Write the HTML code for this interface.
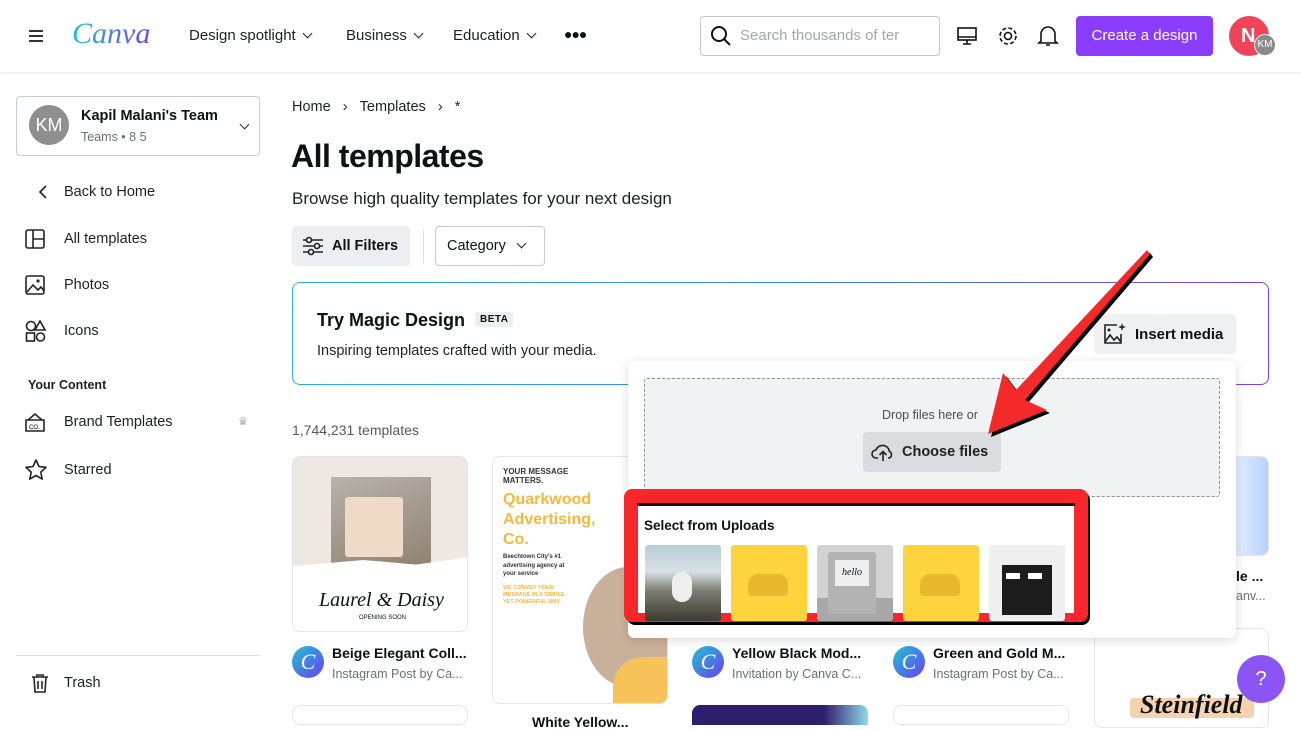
<!DOCTYPE html>
<html><head><meta charset="utf-8"><style>
*{box-sizing:border-box;margin:0;padding:0}
body{width:1301px;height:719px;overflow:hidden;background:#fff;font-family:"Liberation Sans",sans-serif;color:#0d1216;position:relative}
.a{position:absolute}
.t{white-space:nowrap}
.card{position:absolute;border:1px solid #e3e5e8;border-radius:8px;overflow:hidden;background:#fff}
.av{position:absolute;width:32px;height:32px;border-radius:50%;background:linear-gradient(135deg,#1fc3d6,#6a3ff0);color:#fff;font:italic 22px "Liberation Serif",serif;text-align:center;line-height:32px}
.ct{font-size:14px;font-weight:bold}
.cs{font-size:12.5px;color:#6b7078}
.side{font-size:14.5px;color:#1d2127}
.chev{display:inline-block;width:7px;height:7px;border-right:1.6px solid #222;border-bottom:1.6px solid #222;transform:rotate(45deg);margin-left:8px;position:relative;top:-3px}
</style></head><body>
<!-- header -->
<div class="a" style="left:0;top:0;width:1301px;height:72px;background:#fff;box-shadow:0 1px 3px rgba(0,0,0,.1)"></div>
<svg class="a" style="left:28px;top:28px" width="16" height="16"><path d="M1 3h14M1 8h14M1 13h14" stroke="#333" stroke-width="2"/></svg>
<div class="a t" style="left:72px;top:17px;font:italic 30px 'Liberation Serif',serif;background:linear-gradient(90deg,#20c4d4,#7b3ff2);-webkit-background-clip:text;color:transparent">Canva</div>
<div class="a t" style="left:189px;top:27px;font-size:15px;color:#1d2127">Design spotlight<span class="chev"></span></div>
<div class="a t" style="left:346px;top:27px;font-size:15px;color:#1d2127">Business<span class="chev"></span></div>
<div class="a t" style="left:453px;top:27px;font-size:15px;color:#1d2127">Education<span class="chev"></span></div>
<div class="a t" style="left:564px;top:26px;font-size:14px;font-weight:bold;letter-spacing:-1px">●●●</div>
<div class="a" style="left:700px;top:16px;width:240px;height:40px;border:1px solid #c4c8cd;border-radius:4px"></div>
<svg class="a" style="left:710px;top:25px" width="22" height="22"><circle cx="9" cy="9" r="7" fill="none" stroke="#111" stroke-width="2"/><path d="M14 14l6 6" stroke="#111" stroke-width="2"/></svg>
<div class="a t" style="left:740px;top:27px;font-size:15px;color:#a3a7ad">Search thousands of ter</div>
<svg class="a" style="left:956px;top:25px" width="22" height="22"><rect x="2" y="3" width="18" height="12" fill="none" stroke="#111" stroke-width="1.6"/><path d="M2 12h18M7 19h8M11 15v4" stroke="#111" stroke-width="1.6"/></svg>
<svg class="a" style="left:997px;top:25px" width="22" height="22"><circle cx="11" cy="11" r="3.5" fill="none" stroke="#111" stroke-width="1.6"/><circle cx="11" cy="11" r="8" fill="none" stroke="#111" stroke-width="1.6" stroke-dasharray="4 2.3"/></svg>
<svg class="a" style="left:1037px;top:24px" width="22" height="24"><path d="M4 17V10a7 7 0 0114 0v7l2 2H2z M9 21h4" fill="none" stroke="#111" stroke-width="1.6"/></svg>
<div class="a t" style="left:1076px;top:16px;width:137px;height:40px;background:#8b3dff;border-radius:4px;color:#fff;font-size:15px;text-align:center;line-height:40px">Create a design</div>
<div class="a" style="left:1229px;top:16px;width:40px;height:40px;border-radius:50%;background:#ef4458;color:#fff;font-size:20px;font-weight:bold;line-height:40px;padding-left:12px">N</div>
<div class="a" style="left:1254px;top:34px;width:22px;height:22px;border-radius:50%;background:#8a8a8a;border:1.5px solid #fff;color:#fff;font-size:10px;line-height:19px;text-align:center">KM</div>
<!-- sidebar -->
<div class="a" style="left:16px;top:96px;width:244px;height:60px;border:1px solid #c8ccd0;border-radius:4px"></div>
<div class="a" style="left:29px;top:105px;width:40px;height:40px;border-radius:50%;background:#8f8f8f;color:#fff;font-size:18px;line-height:40px;text-align:center">KM</div>
<div class="a t" style="left:81px;top:108px;font-size:14.5px;font-weight:bold">Kapil Malani's Team</div>
<div class="a t" style="left:81px;top:130px;font-size:12.5px;color:#6b7078">Teams • 8 5</div>
<div class="a" style="left:233px;top:118px"><span class="chev"></span></div>
<svg class="a" style="left:37px;top:184px" width="12" height="16"><path d="M9 2L3 8l6 6" fill="none" stroke="#222" stroke-width="1.6"/></svg>
<div class="a t side" style="left:64px;top:184px">Back to Home</div>
<svg class="a" style="left:25px;top:229px" width="22" height="20"><rect x="1" y="1" width="18" height="18" rx="2" fill="none" stroke="#222" stroke-width="1.6"/><path d="M8 1v18M8 10h11" stroke="#222" stroke-width="1.6"/></svg>
<div class="a t side" style="left:64px;top:231px">All templates</div>
<svg class="a" style="left:25px;top:275px" width="22" height="20"><rect x="1" y="1" width="18" height="18" rx="2" fill="none" stroke="#222" stroke-width="1.6"/><path d="M2 17l6-7 5 5 3-3 3 4" fill="none" stroke="#222" stroke-width="1.6"/><circle cx="13" cy="6" r="1.6" fill="#222"/></svg>
<div class="a t side" style="left:64px;top:277px">Photos</div>
<svg class="a" style="left:25px;top:320px" width="22" height="22"><circle cx="6" cy="6" r="4.5" fill="none" stroke="#222" stroke-width="1.6"/><path d="M15 1l5 9h-10z" fill="none" stroke="#222" stroke-width="1.6"/><rect x="1.5" y="13" width="8" height="8" fill="none" stroke="#222" stroke-width="1.6"/><circle cx="15.5" cy="17" r="4" fill="none" stroke="#222" stroke-width="1.6"/></svg>
<div class="a t side" style="left:64px;top:323px">Icons</div>
<div class="a t" style="left:28px;top:378px;font-size:12.5px;font-weight:bold;color:#1d2127">Your Content</div>
<svg class="a" style="left:24px;top:411px" width="22" height="22"><path d="M2 9h18v11H2z M4 9l7-6 7 6" fill="none" stroke="#222" stroke-width="1.6"/><text x="5" y="18" font-size="6" font-family="Liberation Sans">CO.</text></svg>
<div class="a t side" style="left:64px;top:414px">Brand Templates</div>
<div class="a" style="left:238px;top:415px;font-size:11px;color:#aaa">♛</div>
<svg class="a" style="left:24px;top:458px" width="24" height="23"><path d="M12 2l3 6.5 7 .8-5.2 4.8 1.4 7L12 17.5 5.8 21.1l1.4-7L2 9.3l7-.8z" fill="none" stroke="#222" stroke-width="1.6" stroke-linejoin="round"/></svg>
<div class="a t side" style="left:64px;top:462px">Starred</div>
<div class="a" style="left:16px;top:655px;width:244px;height:1px;background:#e0e2e5"></div>
<svg class="a" style="left:30px;top:673px" width="20" height="20"><path d="M2 4h16M7 4V2h6v2M4 4l1 15h10l1-15M8 8v8M12 8v8" fill="none" stroke="#222" stroke-width="1.6"/></svg>
<div class="a t side" style="left:64px;top:675px">Trash</div>
<!-- main -->
<div class="a t" style="left:292px;top:99px;font-size:14.5px;color:#1d2127">Home&nbsp;&nbsp;&nbsp;›&nbsp;&nbsp;&nbsp;Templates&nbsp;&nbsp;&nbsp;›&nbsp;&nbsp;&nbsp;*</div>
<div class="a t" style="left:291px;top:138px;font-size:32px;font-weight:bold;letter-spacing:-.5px">All templates</div>
<div class="a t" style="left:292px;top:189px;font-size:17px;color:#1d2127">Browse high quality templates for your next design</div>
<div class="a" style="left:292px;top:226px;width:118px;height:40px;background:#eceef1;border-radius:4px"></div>
<svg class="a" style="left:302px;top:236px" width="22" height="20"><path d="M1 4h20M1 10h20M1 16h20" stroke="#222" stroke-width="1.6"/><circle cx="7" cy="4" r="2.5" fill="#eceef1" stroke="#222" stroke-width="1.6"/><circle cx="15" cy="10" r="2.5" fill="#eceef1" stroke="#222" stroke-width="1.6"/><circle cx="9" cy="16" r="2.5" fill="#eceef1" stroke="#222" stroke-width="1.6"/></svg>
<div class="a t" style="left:332px;top:238px;font-size:14.5px;font-weight:bold">All Filters</div>
<div class="a" style="left:423px;top:229px;width:1px;height:34px;background:#dcdfe3"></div>
<div class="a" style="left:435px;top:226px;width:110px;height:40px;border:1px solid #c8ccd0;border-radius:4px"></div>
<div class="a t" style="left:447px;top:238px;font-size:14.5px">Category<span class="chev" style="margin-left:12px"></span></div>
<div class="a" style="left:292px;top:282px;width:977px;height:103px;border-radius:8px;background:linear-gradient(90deg,#27b4d8,#3a7de0 60%,#7d3fe8)"></div>
<div class="a" style="left:293px;top:283px;width:975px;height:101px;border-radius:7px;background:#fff"></div>
<div class="a t" style="left:317px;top:310px;font-size:18px;font-weight:bold">Try Magic Design</div>
<div class="a t" style="left:475px;top:312px;font-size:10px;font-weight:bold;background:#eceef1;padding:2px 5px;border-radius:3px;letter-spacing:.5px">BETA</div>
<div class="a t" style="left:317px;top:343px;font-size:14.5px;color:#1d2127">Inspiring templates crafted with your media.</div>
<div class="a" style="left:1094px;top:314px;width:142px;height:40px;background:#eff0f2;border-radius:4px"></div>
<svg class="a" style="left:1103px;top:322px" width="24" height="24"><path d="M14 3H2v18h16v-9" fill="none" stroke="#222" stroke-width="1.6"/><path d="M2 20l5-7 4 5 3-3 4 5" fill="none" stroke="#222" stroke-width="1.6"/><circle cx="6" cy="8" r="1.5" fill="#222"/><path d="M19 1l1 3 3 1-3 1-1 3-1-3-3-1 3-1z" fill="#222"/></svg>
<div class="a t" style="left:1135px;top:326px;font-size:15px;font-weight:bold">Insert media</div>
<div class="a t" style="left:292px;top:422px;font-size:14px;color:#55595f">1,744,231 templates</div>
<!-- cards -->
<div class="card" style="left:292px;top:456px;width:176px;height:176px;background:#efe7e1">
 <div class="a" style="left:38px;top:20px;width:100px;height:105px;background:linear-gradient(160deg,#b7b2ab,#8a7c6a)"></div>
 <div class="a" style="left:52px;top:40px;width:58px;height:60px;background:#efd9c7;border-radius:3px"></div>
 <div class="a" style="left:0;top:100px;width:176px;height:76px;background:#fff;clip-path:polygon(0 12%,40% 4%,70% 10%,100% 0,100% 100%,0 100%)"></div>
 <div class="a t" style="left:26px;top:132px;font:italic 20px 'Liberation Serif',serif">Laurel &amp; Daisy</div>
 <div class="a t" style="left:66px;top:158px;font-size:6px">OPENING SOON</div>
</div>
<div class="av" style="left:292px;top:646px">C</div>
<div class="a t ct" style="left:332px;top:645px">Beige Elegant Coll...</div>
<div class="a t cs" style="left:332px;top:667px">Instagram Post by Ca...</div>
<div class="card" style="left:492px;top:456px;width:176px;height:248px">
 <div class="a t" style="left:10px;top:10px;font-size:8px;font-weight:bold;line-height:9px;color:#333">YOUR MESSAGE<br>MATTERS.</div>
 <div class="a t" style="left:10px;top:33px;font-size:16px;font-weight:bold;line-height:20px;color:#f6b83c">Quarkwood<br>Advertising,<br>Co.</div>
 <div class="a t" style="left:10px;top:96px;font-size:6px;font-weight:bold;line-height:8.5px;color:#333">Beechtown City's #1<br>advertising agency at<br>your service</div>
 <div class="a t" style="left:10px;top:128px;font-size:5.5px;font-weight:bold;line-height:7px;color:#f6b83c">WE CONVEY YOUR<br>MESSAGE IN A SIMPLE<br>YET POWERFUL WAY.</div>
 <div class="a" style="left:90px;top:110px;width:90px;height:120px;border-radius:50%;background:#c9b09a"></div>
 <div class="a" style="left:120px;top:200px;width:60px;height:50px;border-radius:30px 0 0 0;background:#f7c25a"></div>
</div>
<div class="a t ct" style="left:532px;top:714px">White Yellow...</div>
<div class="card" style="left:1094px;top:456px;width:175px;height:100px;background:linear-gradient(90deg,#fff 70%,#b7d0ff)"></div>
<div class="a t ct" style="left:1236px;top:568px">le ...</div>
<div class="a t cs" style="left:1236px;top:589px">anv...</div>
<div class="card" style="left:1094px;top:628px;width:175px;height:100px"></div>
<div class="a t" style="left:1130px;top:698px;width:124px;height:20px;background:#f6d3b0;border-radius:4px"></div>
<div class="a t" style="left:1140px;top:690px;font:italic bold 26px 'Liberation Serif',serif">Steinfield</div>
<div class="av" style="left:692px;top:646px">C</div>
<div class="a t ct" style="left:732px;top:645px">Yellow Black Mod...</div>
<div class="a t cs" style="left:732px;top:667px">Invitation by Canva C...</div>
<div class="av" style="left:893px;top:646px">C</div>
<div class="a t ct" style="left:933px;top:645px">Green and Gold M...</div>
<div class="a t cs" style="left:933px;top:667px">Instagram Post by Ca...</div>
<div class="a" style="left:692px;top:705px;width:176px;height:20px;border-radius:8px 8px 0 0;background:linear-gradient(90deg,#2f1e6e 75%,#8fd8e8)"></div>
<div class="card" style="left:893px;top:705px;width:176px;height:20px"></div>
<div class="card" style="left:292px;top:705px;width:176px;height:20px"></div>
<!-- popup -->
<div class="a" style="left:628px;top:361px;width:608px;height:277px;background:#fff;border-radius:6px;box-shadow:0 2px 10px rgba(0,0,0,.15)"></div>
<div class="a" style="left:644px;top:378px;width:576px;height:119px;background:#f1f2f4;border:1px dashed #8e9399;border-radius:3px"></div>
<div class="a t" style="left:882px;top:408px;font-size:12.5px;color:#4a4f55">Drop files here or</div>
<div class="a" style="left:863px;top:432px;width:138px;height:40px;background:#d9dbdf;border-radius:4px"></div>
<svg class="a" style="left:871px;top:441px" width="24" height="22"><path d="M7 17H5a4 4 0 010-8 7 7 0 0113.5 1.5A3.5 3.5 0 0118 17h-1" fill="none" stroke="#222" stroke-width="1.6"/><path d="M12 20v-9M8.5 14l3.5-3.5 3.5 3.5" fill="none" stroke="#222" stroke-width="1.6"/></svg>
<div class="a t" style="left:902px;top:444px;font-size:14.5px;font-weight:bold;color:#1d2127">Choose files</div>
<!-- red box -->
<div class="a" style="left:627px;top:492px;width:463px;height:133px;background:#000;border-radius:8px"></div>
<div class="a" style="left:624px;top:489px;width:464px;height:133px;background:#f7272c;border-radius:8px"></div>
<div class="a" style="left:637px;top:503px;width:438px;height:3px;background:#111"></div>
<div class="a" style="left:638px;top:506px;width:436px;height:107px;background:#fff"></div>
<div class="a t" style="left:644px;top:518px;font-size:13.5px;font-weight:bold">Select from Uploads</div>
<div class="a" style="left:645px;top:545px;width:76px;height:76px;border-radius:3px;background:linear-gradient(180deg,#b9cdd6 0%,#d7e1e4 35%,#7d7e72 60%,#3e3a30 100%)"></div>
<div class="a" style="left:672px;top:572px;width:20px;height:30px;border-radius:10px;background:#eee"></div>
<div class="a" style="left:731px;top:545px;width:76px;height:76px;border-radius:3px;background:#fdd43e"></div>
<div class="a" style="left:748px;top:574px;width:40px;height:22px;border-radius:10px 10px 4px 4px;background:#e8b92e"></div>
<div class="a" style="left:817px;top:545px;width:76px;height:76px;border-radius:3px;background:linear-gradient(180deg,#d2d2d2 70%,#a8a8a8 70%)"></div>
<div class="a" style="left:828px;top:552px;width:48px;height:62px;border-radius:3px;background:#b3b3b3"></div>
<div class="a t" style="left:835px;top:560px;width:34px;height:26px;background:#eee;font:italic 10px 'Liberation Serif',serif;text-align:center;line-height:26px">hello</div>
<div class="a" style="left:903px;top:545px;width:76px;height:76px;border-radius:3px;background:#fdd43e"></div>
<div class="a" style="left:920px;top:574px;width:40px;height:22px;border-radius:10px 10px 4px 4px;background:#e8b92e"></div>
<div class="a" style="left:989px;top:545px;width:76px;height:76px;border-radius:3px;background:#efefef"></div>
<div class="a" style="left:1002px;top:565px;width:50px;height:50px;background:#1c1c1c"></div>
<div class="a" style="left:1006px;top:573px;width:14px;height:6px;background:#fff"></div>
<div class="a" style="left:1028px;top:573px;width:14px;height:6px;background:#fff"></div>
<!-- arrow -->
<svg class="a" style="left:0;top:0" width="1301" height="719">
<g transform="translate(3,3)" fill="#000"><path d="M1147 250L1150 254L1025 400L1047 410L988 434L1003 373L1016 390Z"/></g>
<path d="M1147 250L1150 254L1025 400L1047 410L988 434L1003 373L1016 390Z" fill="#f42a2a"/>
</svg>
<div class="a" style="left:1237px;top:655px;width:48px;height:48px;border-radius:50%;background:#8b55f5;color:#fff;font-size:20px;text-align:center;line-height:48px">?</div>
</body></html>
